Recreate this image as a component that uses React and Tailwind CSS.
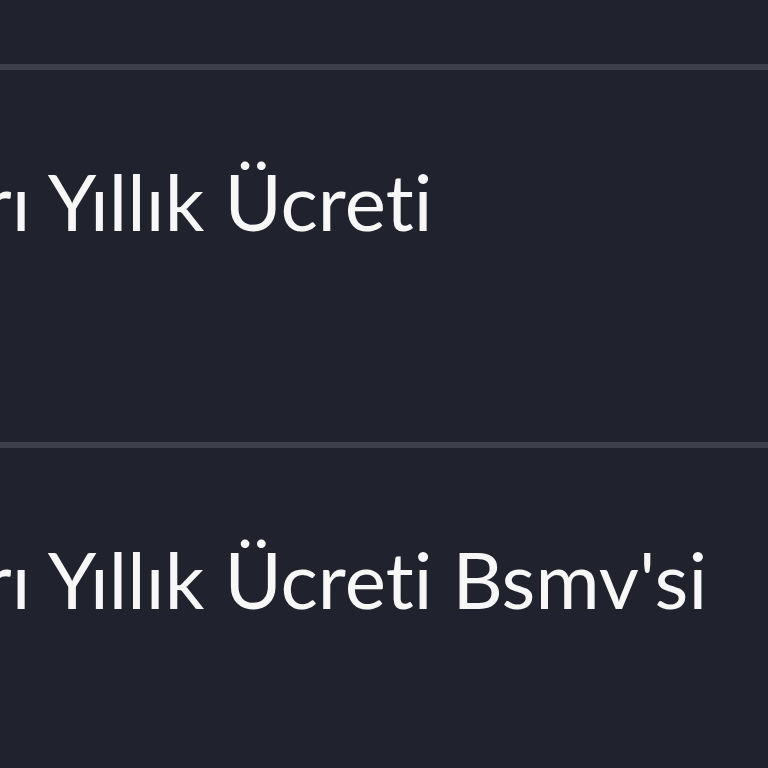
import React from 'react'

const rows = ['Kartları Yıllık Ücreti', "Kartları Yıllık Ücreti Bsmv'si"]

export default function App() {
    return (
        <div className="h-screen w-full overflow-hidden bg-[#20232e] text-[#f7f7f8]" style={{ fontFamily: 'Lato, "Noto Sans", sans-serif' }}>
            <div className="h-[64px]" />
            {rows.map(label => (
                <div key={label} className="h-[378px] border-t-[6px] border-[#3e404c]">
                    <div className="pt-[92px] -ml-[221px] whitespace-nowrap text-[78px] leading-none tracking-[0.1px] [font-variant-ligatures:none]">{label}</div>
                </div>
            ))}
        </div>
    )
}
